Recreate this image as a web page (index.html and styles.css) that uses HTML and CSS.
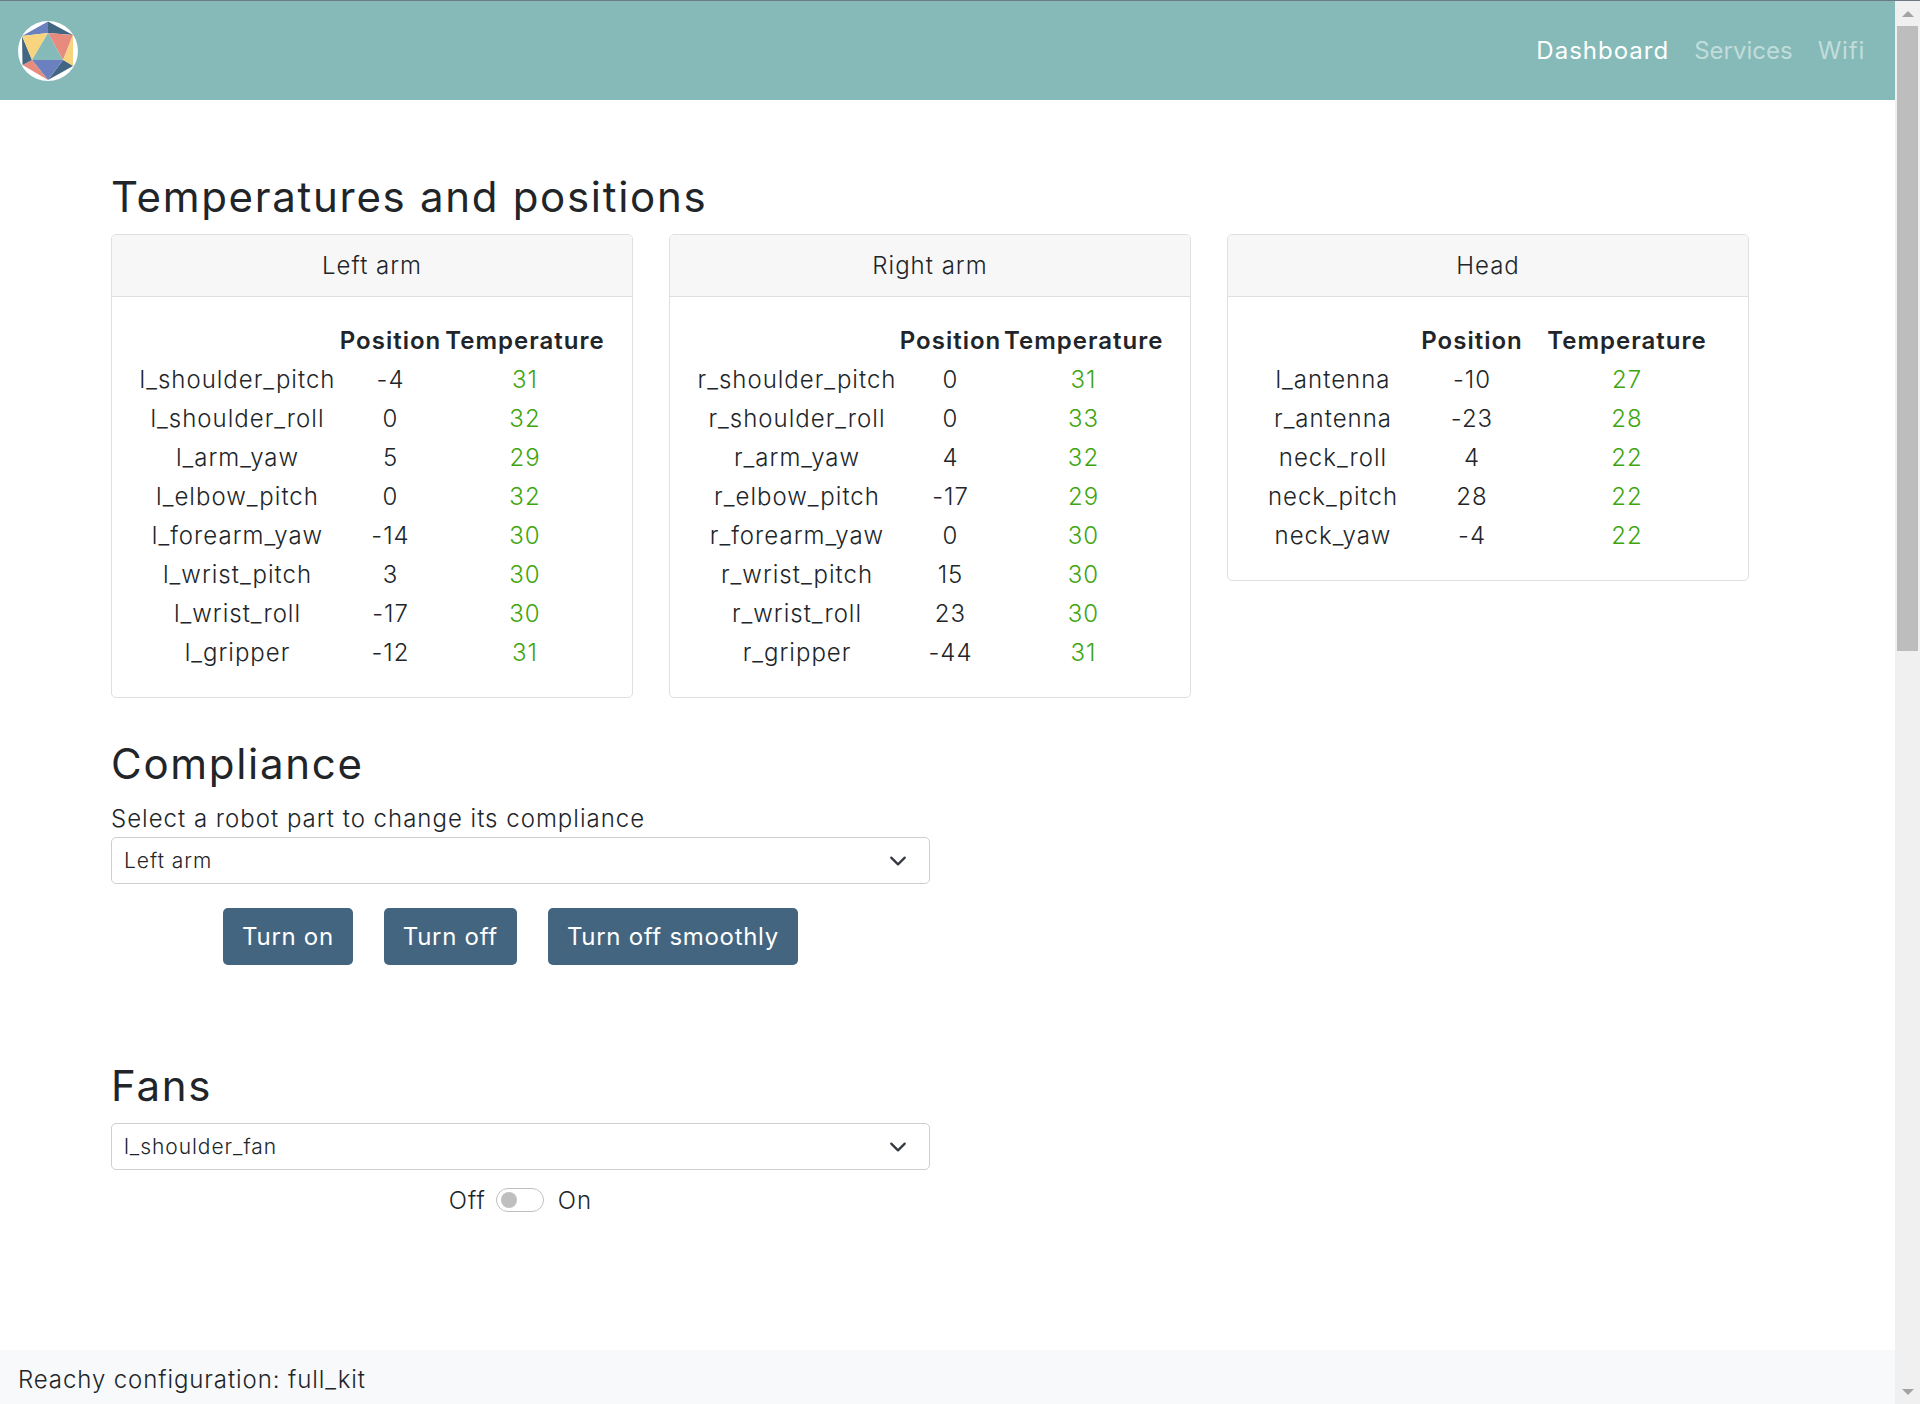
FILE: index.html
```html
<!DOCTYPE html>
<html lang="en">
<head>
<meta charset="utf-8">
<title>Reachy dashboard</title>
<link rel="stylesheet" href="styles.css">
</head>
<body>
<div class="window">
  <div class="page">
    <nav class="navbar">
      <svg class="logo" viewBox="0 0 60 60" aria-label="Reachy logo">
        <circle cx="30" cy="30" r="30" fill="#fff"/>
        <polygon points="30,0.5 4,15 30,12" fill="#6a80bf"/>
        <polygon points="30,0.5 55,14 30,12" fill="#426582"/>
        <polygon points="30,12 55,14 45,39" fill="#e88b7f"/>
        <polygon points="55,14 55,45 45,39" fill="#f8d47e"/>
        <polygon points="45,39 55,45 30,59" fill="#426582"/>
        <polygon points="14,39 45,39 30,59" fill="#6a80bf"/>
        <polygon points="14,39 30,59 4.500,44" fill="#e88b7f"/>
        <polygon points="4,15 14,39 4.500,44" fill="#426582"/>
        <polygon points="4,15 30,12 14,39" fill="#f8d47e"/>
        <polygon points="30,12 45,39 14,39" fill="#85bab8"/>
      </svg>
      <div class="nav-links">
        <a class="nav-link active">Dashboard</a>
        <a class="nav-link nav-link-tight">Services</a>
        <a class="nav-link">Wifi</a>
      </div>
    </nav>

    <main class="content">
      <h2 class="title title-first">Temperatures and positions</h2>
      <div class="cards">
        <section class="card">
          <div class="card-header">Left arm</div>
          <div class="card-body">
            <table class="joints cols-arm-left">
              <colgroup><col class="c1"><col class="c2"><col class="c3"></colgroup>
              <tr><th></th><th>Position</th><th>Temperature</th></tr>
              <tr><td>l_shoulder_pitch</td><td>-4</td><td class="temp">31</td></tr>
              <tr><td>l_shoulder_roll</td><td>0</td><td class="temp">32</td></tr>
              <tr><td>l_arm_yaw</td><td>5</td><td class="temp">29</td></tr>
              <tr><td>l_elbow_pitch</td><td>0</td><td class="temp">32</td></tr>
              <tr><td>l_forearm_yaw</td><td>-14</td><td class="temp">30</td></tr>
              <tr><td>l_wrist_pitch</td><td>3</td><td class="temp">30</td></tr>
              <tr><td>l_wrist_roll</td><td>-17</td><td class="temp">30</td></tr>
              <tr><td>l_gripper</td><td>-12</td><td class="temp">31</td></tr>
            </table>
          </div>
        </section>
        <section class="card">
          <div class="card-header">Right arm</div>
          <div class="card-body">
            <table class="joints cols-arm-right">
              <colgroup><col class="c1"><col class="c2"><col class="c3"></colgroup>
              <tr><th></th><th>Position</th><th>Temperature</th></tr>
              <tr><td>r_shoulder_pitch</td><td>0</td><td class="temp">31</td></tr>
              <tr><td>r_shoulder_roll</td><td>0</td><td class="temp">33</td></tr>
              <tr><td>r_arm_yaw</td><td>4</td><td class="temp">32</td></tr>
              <tr><td>r_elbow_pitch</td><td>-17</td><td class="temp">29</td></tr>
              <tr><td>r_forearm_yaw</td><td>0</td><td class="temp">30</td></tr>
              <tr><td>r_wrist_pitch</td><td>15</td><td class="temp">30</td></tr>
              <tr><td>r_wrist_roll</td><td>23</td><td class="temp">30</td></tr>
              <tr><td>r_gripper</td><td>-44</td><td class="temp">31</td></tr>
            </table>
          </div>
        </section>
        <section class="card">
          <div class="card-header">Head</div>
          <div class="card-body">
            <table class="joints cols-head">
              <colgroup><col class="c1"><col class="c2"><col class="c3"></colgroup>
              <tr><th></th><th>Position</th><th>Temperature</th></tr>
              <tr><td>l_antenna</td><td>-10</td><td class="temp">27</td></tr>
              <tr><td>r_antenna</td><td>-23</td><td class="temp">28</td></tr>
              <tr><td>neck_roll</td><td>4</td><td class="temp">22</td></tr>
              <tr><td>neck_pitch</td><td>28</td><td class="temp">22</td></tr>
              <tr><td>neck_yaw</td><td>-4</td><td class="temp">22</td></tr>
            </table>
          </div>
        </section>
      </div>

      <h2 class="title title-compliance">Compliance</h2>
      <p class="field-label">Select a robot part to change its compliance</p>
      <div class="select">
        <span>Left arm</span>
        <svg class="chevron" viewBox="0 0 16 16"><path d="M2 5l6 6 6-6" fill="none" stroke="#343a40" stroke-width="2" stroke-linecap="round" stroke-linejoin="round"/></svg>
      </div>
      <div class="buttons">
        <button class="btn">Turn on</button>
        <button class="btn">Turn off</button>
        <button class="btn">Turn off smoothly</button>
      </div>

      <h2 class="title title-fans">Fans</h2>
      <div class="select">
        <span>l_shoulder_fan</span>
        <svg class="chevron" viewBox="0 0 16 16"><path d="M2 5l6 6 6-6" fill="none" stroke="#343a40" stroke-width="2" stroke-linecap="round" stroke-linejoin="round"/></svg>
      </div>
      <div class="fan-toggle">
        <span>Off</span>
        <span class="switch"><span class="knob"></span></span>
        <span>On</span>
      </div>
    </main>

    <footer class="footer">Reachy configuration: full_kit</footer>
  </div>

  <aside class="scrollbar">
    <span class="arrow arrow-up"></span>
    <span class="thumb"></span>
    <span class="arrow arrow-down"></span>
  </aside>
</div>
</body>
</html>
```

FILE: styles.css
```css
* { box-sizing: border-box; }

html, body {
  margin: 0;
  height: 1404px;
  overflow: hidden;
}

body {
  font-family: "Inter", "Liberation Sans", sans-serif;
  font-size: 24px;
  letter-spacing: 1px;
  color: #212529;
  background: #fff;
}

.window {
  display: flex;
  height: 1404px;
  border-top: 1px solid #6c7a86;
}

.page {
  flex: 1;
  display: flex;
  flex-direction: column;
  min-width: 0;
}

.navbar {
  height: 99px;
  flex: none;
  background: #85bab8;
  display: flex;
  align-items: center;
  justify-content: space-between;
  padding: 0 30px 0 18px;
}

.logo { width: 60px; height: 60px; display: block; }

.nav-links { display: flex; gap: 25px; }

.nav-link {
  font-size: 24px;
  letter-spacing: 0.8px;
  color: rgba(255, 255, 255, 0.5);
}
.nav-link-tight { letter-spacing: 0; }
.nav-link.active { color: #fff; letter-spacing: 1px; }

.content {
  flex: 1;
  padding: 0 0 0 111px;
}

.title {
  margin: 0;
  font-size: 42px;
  font-weight: 400;
  letter-spacing: 1.7px;
  line-height: 48px;
  color: #212529;
}
.title-first { margin-top: 73px; margin-bottom: 13px; }
.title-compliance { margin-top: 42px; }
.title-fans { margin-top: 97px; margin-bottom: 13px; }

.cards {
  display: flex;
  align-items: flex-start;
  gap: 36px;
}

.card {
  width: 522px;
  border: 1px solid #dfdfdf;
  border-radius: 5px;
  overflow: hidden;
}

.card-header {
  height: 62px;
  background: #f7f7f7;
  border-bottom: 1px solid #dfdfdf;
  display: flex;
  align-items: center;
  justify-content: center;
  font-weight: 300;
}

.card-body { padding: 24px 27px 25px; }

.joints {
  width: 466px;
  border-collapse: collapse;
  table-layout: fixed;
  text-align: center;
}
.joints tr { height: 39px; }
.joints th, .joints td { padding: 0; white-space: nowrap; }
.joints th { font-weight: 600; }
.joints td { font-weight: 300; }
.joints td.temp { color: #3fa50f; }

.cols-arm-left .c1 { width: 197px; }
.cols-arm-left .c2 { width: 109px; }
.cols-arm-left .c3 { width: 160px; }
.cols-arm-right .c1 { width: 200px; }
.cols-arm-right .c2 { width: 107px; }
.cols-arm-right .c3 { width: 159px; }
.cols-head .c1 { width: 156px; }
.cols-head .c2 { width: 122px; }
.cols-head .c3 { width: 188px; }

.field-label {
  margin: 13px 0 0;
  line-height: 36px;
  font-weight: 300;
}

.select {
  width: 819px;
  height: 47px;
  border: 1px solid #cfcfcf;
  border-radius: 5px;
  padding: 0 22px 0 12px;
  display: flex;
  align-items: center;
  justify-content: space-between;
  font-size: 21px;
  letter-spacing: 0.95px;
  font-weight: 300;
}

.chevron { width: 18px; height: 18px; display: block; }

.buttons {
  width: 819px;
  margin-top: 24px;
  padding-right: 20px;
  display: flex;
  justify-content: center;
  gap: 31px;
}

.btn {
  height: 57px;
  padding: 0 19px;
  border: 0;
  border-radius: 5px;
  background: #436580;
  color: #fff;
  font: 400 24px "Inter", "Liberation Sans", sans-serif;
  letter-spacing: 0.7px;
}

.fan-toggle {
  width: 819px;
  margin-top: 12px;
  display: flex;
  justify-content: center;
  align-items: center;
  gap: 11px;
  height: 36px;
  font-weight: 300;
}

.switch {
  width: 48px;
  height: 24px;
  margin: 0 3px 0 -1px;
  border: 1px solid #bfbfbf;
  border-radius: 12px;
  display: flex;
  align-items: center;
  padding-left: 4px;
}
.knob {
  width: 16px;
  height: 16px;
  border-radius: 50%;
  background: #bfbfbf;
}

.footer {
  flex: none;
  height: 54px;
  background: #f8f9fa;
  padding: 5px 0 0 18px;
  display: flex;
  align-items: center;
  letter-spacing: 0.9px;
  font-weight: 300;
}

.scrollbar {
  width: 25px;
  flex: none;
  background: #f0f0f0;
  display: flex;
  flex-direction: column;
  align-items: center;
  position: relative;
}

.thumb {
  width: 21px;
  height: 625px;
  background: #bdbdbd;
}

.arrow {
  width: 0;
  height: 0;
  border-left: 6px solid transparent;
  border-right: 6px solid transparent;
}
.arrow-up {
  border-bottom: 6px solid #a3a3a3;
  margin: 10px 0 9px;
}
.arrow-down {
  border-top: 6px solid #a3a3a3;
  margin-top: auto;
  margin-bottom: 9px;
}
```
